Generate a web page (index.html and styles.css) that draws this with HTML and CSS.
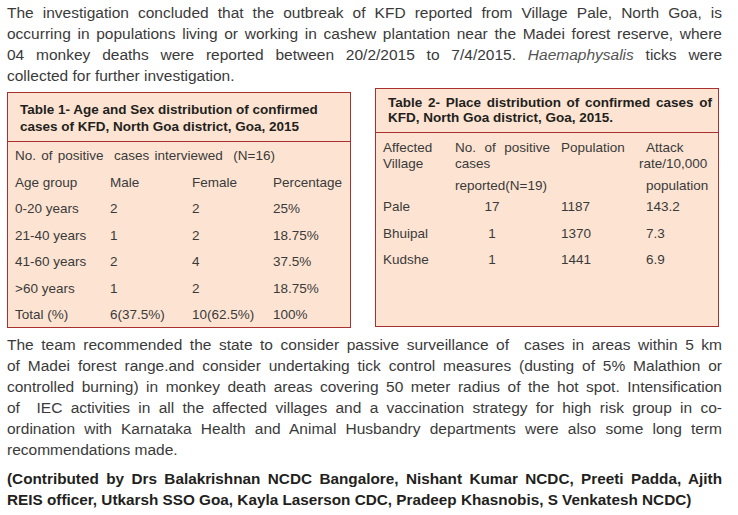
FILE: index.html
```html
<!DOCTYPE html>
<html lang="en">
<head>
<meta charset="utf-8">
<title>KFD outbreak, North Goa</title>
<link rel="stylesheet" href="styles.css">
</head>
<body>
<main class="page">
  <p class="para">
    <span class="jl">The investigation concluded that the outbreak of KFD reported from Village Pale, North Goa, is</span>
    <span class="jl">occurring in populations living or working in cashew plantation near the Madei forest reserve, where</span>
    <span class="jl">04 monkey deaths were reported between 20/2/2015 to 7/4/2015. <em class="sp">Haemaphysalis</em> ticks were</span>
    <span class="ll">collected for further investigation.</span>
  </p>

  <div class="tables">
    <section class="box box1">
      <h2 class="box-title t1-title">Table 1- Age and Sex distribution of confirmed cases of KFD, North Goa district, Goa, 2015</h2>
      <div class="grid1">
        <div class="span-all wide">No. of positive&nbsp; cases interviewed&nbsp; (N=16)</div>
        <div>Age group</div><div>Male</div><div>Female</div><div>Percentage</div>
        <div>0-20 years</div><div>2</div><div>2</div><div>25%</div>
        <div>21-40 years</div><div>1</div><div>2</div><div>18.75%</div>
        <div>41-60 years</div><div>2</div><div>4</div><div>37.5%</div>
        <div>&gt;60 years</div><div>1</div><div>2</div><div>18.75%</div>
        <div>Total (%)</div><div>6(37.5%)</div><div>10(62.5%)</div><div>100%</div>
      </div>
    </section>

    <section class="box box2">
      <h2 class="box-title t2-title"><span class="jl">Table 2- Place distribution of confirmed cases of</span><span class="ll">KFD, North Goa district, Goa, 2015.</span></h2>
      <div class="grid2">
        <div class="hd">Affected<br>Village</div>
        <div class="hd"><span class="jl nw">No. of positive</span><span class="ll">cases</span></div>
        <div class="hd">Population</div>
        <div class="hd"><span class="ll ind">Attack</span><span class="ll">rate/10,000</span></div>
        <div class="hd2"></div>
        <div class="hd2">reported(N=19)</div>
        <div class="hd2"></div>
        <div class="hd2 ind">population</div>

        <div class="dt">Pale</div><div class="dt num">17</div><div class="dt">1187</div><div class="dt ind">143.2</div>
        <div class="dt">Bhuipal</div><div class="dt num">1</div><div class="dt">1370</div><div class="dt ind">7.3</div>
        <div class="dt">Kudshe</div><div class="dt num">1</div><div class="dt">1441</div><div class="dt ind">6.9</div>
      </div>
    </section>
  </div>

  <p class="para para2">
    <span class="jl">The team recommended the state to consider passive surveillance of&nbsp; cases in areas within 5 km</span>
    <span class="jl">of Madei forest range.and consider undertaking tick control measures (dusting of 5% Malathion or</span>
    <span class="jl">controlled burning) in monkey death areas covering 50 meter radius of the hot spot. Intensification</span>
    <span class="jl">of&nbsp; IEC activities in all the affected villages and a vaccination strategy for high risk group in co-</span>
    <span class="jl">ordination with Karnataka Health and Animal Husbandry departments were also some long term</span>
    <span class="ll">recommendations made.</span>
  </p>

  <p class="para credits">
    <span class="jl">(Contributed by Drs Balakrishnan NCDC Bangalore, Nishant Kumar NCDC, Preeti Padda, Ajith</span>
    <span class="ll">REIS officer, Utkarsh SSO Goa, Kayla Laserson CDC, Pradeep Khasnobis, S Venkatesh NCDC)</span>
  </p>
</main>
</body>
</html>
```

FILE: styles.css
```css
html, body {
  margin: 0;
  padding: 0;
  background: #ffffff;
}

.page {
  width: 715px;
  margin: 0 0 0 7px;
  padding-top: 2px;
  font-family: "Liberation Sans", Arial, sans-serif;
  color: #3a3a3a;
}

.para {
  margin: 0;
  font-size: 15.5px;
  line-height: 21px;
}

.jl {
  display: block;
  text-align: justify;
  text-align-last: justify;
  white-space: nowrap;
}

.ll {
  display: block;
  white-space: nowrap;
}

.sp {
  font-style: italic;
  color: #555;
}

.tables {
  display: flex;
  gap: 24px;
  align-items: flex-start;
  margin-top: 2px;
}

.box {
  width: 344px;
  box-sizing: border-box;
  background: #fde4d2;
  border: 1.5px solid #a8302e;
}

.box1 {
  margin-top: 4px;
  height: 236px;
}

.box2 {
  height: 239px;
}

.box-title {
  margin: 0;
  font-weight: bold;
  color: #231f20;
  border-bottom: 1.5px solid #a8302e;
}

.t1-title {
  font-size: 13.5px;
  line-height: 17px;
  padding: 8px 14px 6px 12px;
}

.t2-title {
  font-size: 13.5px;
  line-height: 15px;
  padding: 6px 6px 7px 12px;
}

.grid1 {
  display: grid;
  grid-template-columns: 95px 82px 81px auto;
  grid-auto-rows: 26.5px;
  align-items: center;
  padding-left: 7px;
  padding-top: 1px;
  font-size: 13.5px;
  line-height: 16px;
}

.span-all {
  grid-column: 1 / -1;
}

.wide {
  word-spacing: 1.5px;
}

.grid2 {
  display: grid;
  grid-template-columns: 72px 106px 78px auto;
  padding-left: 7px;
  padding-top: 7px;
  font-size: 13.5px;
  line-height: 16px;
}

.hd {
  line-height: 16px;
}

.hd .nw {
  width: 95px;
}

.hd2 {
  padding-top: 6px;
  line-height: 16px;
}

.dt {
  line-height: 26.5px;
}

.num {
  width: 74px;
  text-align: center;
}

.ind {
  padding-left: 7px;
}

.para2 {
  margin-top: 6px;
}

.credits {
  margin-top: 8px;
  font-size: 15.3px;
  font-weight: bold;
  color: #231f20;
}
```
